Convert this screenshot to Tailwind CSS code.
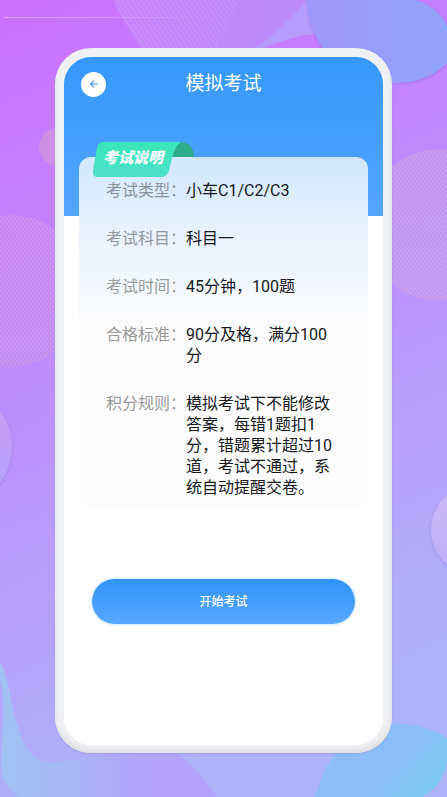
<!DOCTYPE html>
<html lang="zh-CN">
<head>
<meta charset="utf-8">
<meta name="viewport" content="width=device-width, initial-scale=1">
<title>模拟考试</title>
<script src="https://cdn.jsdelivr.net/npm/@tailwindcss/browser@4"></script>
</head>
<body class="relative isolate min-h-screen overflow-x-hidden bg-[#bb98fb] font-['Roboto','Noto_Sans_CJK_SC',sans-serif]">

<!-- Decorative backdrop -->
<svg class="absolute inset-0 -z-10 h-full w-full" viewBox="0 0 447 797" preserveAspectRatio="xMidYMid slice" aria-hidden="true">
  <defs>
    <linearGradient id="bg" x1="0" y1="0" x2="0.25" y2="1">
      <stop offset="0" stop-color="#cb70ff"/><stop offset="0.5" stop-color="#bd90fc"/><stop offset="1" stop-color="#afb3f8"/>
    </linearGradient>
    <linearGradient id="wave" x1="0" y1="0" x2="1" y2="0">
      <stop offset="0" stop-color="#a0c2f4"/><stop offset="0.35" stop-color="#a8b6f6"/><stop offset="0.6" stop-color="#b3a5fa"/><stop offset="1" stop-color="#b4a2fa"/>
    </linearGradient>
    <linearGradient id="ball" x1="0" y1="0" x2="0" y2="1">
      <stop offset="0" stop-color="#d09af4"/><stop offset="1" stop-color="#aea2fa"/>
    </linearGradient>
    <linearGradient id="ballR" x1="0" y1="0" x2="0" y2="1">
      <stop offset="0" stop-color="#cbbaf8"/><stop offset="1" stop-color="#bcaef8"/>
    </linearGradient>
    <linearGradient id="blob" x1="0" y1="0" x2="1" y2="0">
      <stop offset="0" stop-color="#9f98fb"/><stop offset="1" stop-color="#92a2fb"/>
    </linearGradient>
    <linearGradient id="cyan" x1="0" y1="0" x2="1" y2="0.5">
      <stop offset="0" stop-color="#93baf8"/><stop offset="0.7" stop-color="#8cbff7"/><stop offset="1" stop-color="#7fc8f2"/>
    </linearGradient>
    <linearGradient id="mesh" x1="0" y1="0" x2="1" y2="0">
      <stop offset="0" stop-color="#c584fb"/><stop offset="1" stop-color="#b98dfb"/>
    </linearGradient>
    <linearGradient id="rule" x1="0" y1="0" x2="1" y2="0">
      <stop offset="0" stop-color="#fff" stop-opacity="0.35"/><stop offset="1" stop-color="#fff" stop-opacity="0"/>
    </linearGradient>
    <pattern id="dots" width="4" height="5" patternUnits="userSpaceOnUse">
      <circle cx="1" cy="1.2" r="0.8" fill="#e2b2e6" fill-opacity="0.6"/><circle cx="3" cy="3.7" r="0.8" fill="#e2b2e6" fill-opacity="0.6"/>
    </pattern>
    <pattern id="lines" width="4" height="4" patternUnits="userSpaceOnUse" patternTransform="rotate(-34)">
      <path d="M1 0V4" stroke="#d9a8fc" stroke-width="1" stroke-opacity="0.5"/>
    </pattern>
    <filter id="soft" x="-20%" y="-20%" width="140%" height="140%"><feDropShadow dx="0" dy="1" stdDeviation="1.5" flood-color="#6c5ac8" flood-opacity="0.35"/></filter>
  </defs>
  <rect width="447" height="797" fill="url(#bg)"/>
  <path d="M113 0H307L315 34C295 36 280 41 265 48L240 62H150C137 43 123 22 113 0Z" fill="url(#mesh)" fill-opacity="0.9"/>
  <path d="M113 0H240L210 62H150C137 43 123 22 113 0Z" fill="url(#lines)"/>
  <path d="M307 0L315 34C295 36 280 41 265 48H255C275 34 292 18 307 0Z" fill="#b5a0fb" fill-opacity="0.8"/>
  <rect x="4" y="17" width="230" height="1" fill="url(#rule)"/>
  <path d="M307 -5C307 38 335 83 395 83C420 83 437 74 450 60V35C446 20 437 6 415 0L400 -5Z" fill="url(#blob)" filter="url(#soft)"/>
  <circle cx="58" cy="147" r="19" fill="#cb90e3"/>
  <circle cx="10" cy="291" r="76" fill="#c78fe9" fill-opacity="0.5"/>
  <circle cx="10" cy="291" r="76" fill="url(#dots)"/>
  <circle cx="440" cy="225" r="76" fill="#c59be9" fill-opacity="0.5"/>
  <circle cx="440" cy="225" r="76" fill="url(#dots)"/>
  <circle cx="-48" cy="447" r="60" fill="url(#ball)" filter="url(#soft)"/>
  <circle cx="477" cy="530" r="46" fill="url(#ballR)" filter="url(#soft)"/>
  <path d="M0 662C10 678 10 710 22 738C30 758 42 764 58 762C100 756 130 748 175 752C195 765 205 780 217 797H20C8 790 2 780 1 765C2 735 6 700 0 680Z" fill="url(#wave)"/>
  <path d="M315 797C320 772 340 740 365 728C390 719 425 724 447 738V760C444 778 436 790 422 797Z" fill="url(#cyan)"/>
</svg>

<main class="px-[55px] pt-12 pb-11">
  <div class="rounded-[36px] bg-[#f0f1f5] px-[9px] pt-[9px] pb-2 shadow-[inset_0_-4px_5px_#e0e0e3,0_1px_2px_#8c7ac455]">
    <div class="min-h-[688px] overflow-hidden rounded-[27px] bg-[linear-gradient(180deg,#3598fc_0px,#54a5ff_159px,#ffffff_159px)] px-[15px] pb-[120px]">

      <header class="grid h-[54px] grid-cols-[1fr_auto_1fr] items-center">
        <a href="#" aria-label="返回" class="ml-[2px] grid size-[25px] place-items-center rounded-full bg-white">
          <svg class="size-[10px]" viewBox="0 0 10 10" fill="none" stroke="#3c96ee" stroke-width="1.1" stroke-linecap="round" stroke-linejoin="round" aria-hidden="true"><path d="M8.4 5H1.8M4.8 1.8L1.6 5L4.8 8.2"/></svg>
        </a>
        <h1 class="text-[19px] leading-7 text-white">模拟考试</h1>
      </header>

      <section class="relative mt-[46px] rounded-xl bg-[linear-gradient(180deg,#d2e7fe_0px,#e9f3fe_80px,#fcfcfd_170px,#fcfcfd_100%)] pt-[23px] pr-[33px] pb-[9px] pl-[27px]">
        <div class="absolute -top-[15px] left-[14px] h-[35px] w-[101px]">
          <svg class="absolute inset-0 h-full w-full" viewBox="0 0 101 35" aria-hidden="true">
            <defs><linearGradient id="tag" x1="0" y1="0" x2="0" y2="1"><stop offset="0" stop-color="#39e6b8"/><stop offset="1" stop-color="#4ee0c9"/></linearGradient></defs>
            <path d="M87 0C96 0 101 6 101 15H79C79 7 82 0 87 0Z" fill="#2fac8b"/>
            <path d="M10 0H88C83 3 81 9 79 16L76 29Q74 35 68 35H5Q-1 35 0 29L4 6Q5 0 10 0Z" fill="url(#tag)"/>
          </svg>
          <h2 class="relative pl-[10px] text-[15px] leading-8 font-black whitespace-nowrap text-white italic">考试说明</h2>
        </div>
        <dl class="grid grid-cols-[80px_1fr] gap-y-[27px] text-base leading-[21px]">
          <dt class="text-[#8a929b]">考试类型：</dt><dd class="text-[#15181c]">小车C1/C2/C3</dd>
          <dt class="text-[#93989e]">考试科目：</dt><dd class="text-[#15181c]">科目一</dd>
          <dt class="text-[#999b9e]">考试时间：</dt><dd class="text-[#15181c]">45分钟，100题</dd>
          <dt class="text-[#9b9b9b]">合格标准：</dt><dd class="text-[#15181c]">90分及格，满分100分</dd>
          <dt class="text-[#9b9b9b]">积分规则：</dt><dd class="text-[#15181c]">模拟考试下不能修改答案，每错1题扣1分，错题累计超过10道，考试不通过，系统自动提醒交卷。</dd>
        </dl>
      </section>

      <div class="px-[13px] pt-[72px]">
        <button type="button" class="h-[45px] w-full rounded-full bg-linear-to-b from-[#2f94fc] to-[#58a7ff] text-xs font-medium text-white shadow-[0_0_3px_#9fd0ff]">开始考试</button>
      </div>
    </div>
  </div>
</main>
</body>
</html>
